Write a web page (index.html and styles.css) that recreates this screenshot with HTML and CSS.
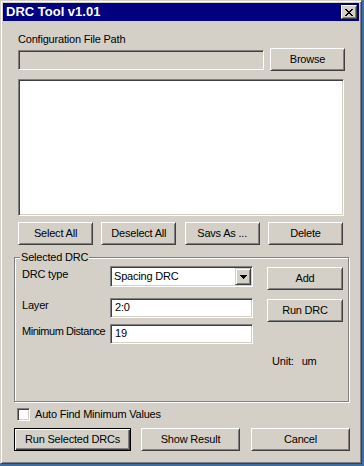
FILE: index.html
```html
<!DOCTYPE html>
<html>
<head>
<meta charset="utf-8">
<link rel="stylesheet" href="styles.css">
</head>
<body>
<div class="window">
  <div class="titlebar">
    <span class="title">DRC Tool v1.01</span>
    <button class="close" aria-label="Close">
      <svg width="8" height="7" viewBox="0 0 8 7"><path fill="#000" d="M0 0h2v1H0z M6 0h2v1H6z M1 1h2v1H1z M5 1h2v1H5z M2 2h4v1H2z M3 3h2v1H3z M2 4h4v1H2z M1 5h2v1H1z M5 5h2v1H5z M0 6h2v1H0z M6 6h2v1H6z"/></svg>
    </button>
  </div>
  <div class="client">
    <div class="cfg-label">Configuration File Path</div>
    <div class="path-row">
      <div class="field path-field"></div>
      <button class="btn browse">Browse</button>
    </div>
    <div class="field listbox"></div>
    <div class="btn-row">
      <button class="btn">Select All</button>
      <button class="btn">Deselect All</button>
      <button class="btn">Savs As ...</button>
      <button class="btn">Delete</button>
    </div>
    <fieldset class="group">
      <legend>Selected DRC</legend>
      <div class="group-body">
        <div class="left">
          <div class="frow r1">
            <span class="lbl lbl-combo">DRC type</span>
            <div class="field combo">
              <span class="combo-text">Spacing DRC</span>
              <span class="combo-btn">
                <svg width="7" height="4" viewBox="0 0 7 4"><path fill="#000" d="M0 0h7v1H0z M1 1h5v1H1z M2 2h3v1H2z M3 3h1v1H3z"/></svg>
              </span>
            </div>
          </div>
          <div class="frow r2">
            <span class="lbl">Layer</span>
            <div class="field input">2:0</div>
          </div>
          <div class="frow r3">
            <span class="lbl lbl-tight">Minimum Distance</span>
            <div class="field input">19</div>
          </div>
        </div>
        <div class="right">
          <button class="btn side add">Add</button>
          <button class="btn side run">Run DRC</button>
          <div class="unit">Unit:<span class="um">um</span></div>
        </div>
      </div>
    </fieldset>
    <label class="check-row"><span class="field checkbox"></span><span>Auto Find Minimum Values</span></label>
    <div class="bottom-row">
      <button class="btn default">Run Selected DRCs</button>
      <button class="btn show">Show Result</button>
      <button class="btn cancel">Cancel</button>
    </div>
  </div>
</div>
</body>
</html>
```
FILE: styles.css
```css
html, body {
  margin: 0;
  padding: 0;
}
body {
  background: #3a6ea5;
  font: 11px/13px "Liberation Sans", Arial, sans-serif;
  letter-spacing: -0.2px;
  color: #000;
}
.window {
  width: 362px;
  height: 464px;
  box-sizing: border-box;
  background: #d4d0c8;
  border: 1px solid;
  border-color: #d4d0c8 #404040 #404040 #d4d0c8;
  box-shadow: inset 1px 1px #fff, inset -1px -1px #808080;
  padding: 2px;
}
.titlebar {
  height: 18px;
  background: #000080;
  display: flex;
  align-items: center;
  justify-content: space-between;
  padding: 0 2px 0 3px;
  color: #fff;
  font-weight: bold;
  font-size: 13px;
  line-height: 18px;
  letter-spacing: 0;
}
.close {
  width: 16px;
  height: 14px;
  box-sizing: border-box;
  padding: 0;
  background: #d4d0c8;
  border: 1px solid;
  border-color: #fff #404040 #404040 #fff;
  box-shadow: inset 1px 1px #d4d0c8, inset -1px -1px #808080;
  display: flex;
  align-items: center;
  justify-content: center;
}
.close svg {
  display: block;
}
.client {
  padding: 0 8px 0 11px;
}
.field {
  box-sizing: border-box;
  background: #fff;
  border: 1px solid;
  border-color: #808080 #fff #fff #808080;
  box-shadow: inset 1px 1px #404040, inset -1px -1px #d4d0c8;
}
.btn {
  box-sizing: border-box;
  height: 23px;
  background: #d4d0c8;
  border: 1px solid;
  border-color: #fff #404040 #404040 #fff;
  box-shadow: inset 1px 1px #d4d0c8, inset -1px -1px #808080;
  font: inherit;
  letter-spacing: inherit;
  color: #000;
  padding: 0;
  margin: 0;
}
.cfg-label {
  margin: 12px 0 0 4px;
}
.path-row {
  display: flex;
  margin: 2px 6px 0 4px;
  gap: 6px;
}
.path-field {
  flex: 1;
  height: 20px;
  margin-top: 2px;
  background: #d4d0c8;
}
.browse {
  width: 75px;
}
.listbox {
  height: 137px;
  margin: 8px 7px 0 4px;
}
.btn-row {
  display: flex;
  justify-content: space-between;
  margin: 6px 8px 0 4px;
}
.btn-row .btn {
  width: 75px;
}
.group {
  margin: 6px 2px 0 0;
  padding: 2px 7px 33px 7px;
  border: 1px solid #808080;
  box-shadow: 1px 1px #fff, inset 1px 1px #fff;
  min-width: 0;
}
.group legend {
  padding: 0 1px;
  margin-left: -2px;
  line-height: 13px;
  background: #d4d0c8;
}
.group-body {
  display: flex;
}
.left {
  width: 231px;
}
.frow {
  display: flex;
  align-items: flex-start;
}
.lbl {
  width: 88px;
  flex: none;
  padding-top: 1px;
  white-space: nowrap;
}
.lbl-combo {
  padding-top: 2px;
}
.lbl-tight {
  letter-spacing: -0.45px;
}
.r2 {
  margin-top: 11px;
}
.r3 {
  margin-top: 6px;
}
.combo {
  width: 143px;
  height: 21px;
  display: flex;
  align-items: center;
  justify-content: space-between;
  padding: 1px;
}
.combo-text {
  padding-left: 2px;
}
.combo-btn {
  width: 16px;
  height: 17px;
  box-sizing: border-box;
  background: #d4d0c8;
  border: 1px solid;
  border-color: #d4d0c8 #404040 #404040 #d4d0c8;
  box-shadow: inset 1px 1px #fff, inset -1px -1px #808080;
  display: flex;
  align-items: center;
  justify-content: center;
}
.combo-btn svg {
  display: block;
}
.input {
  width: 143px;
  height: 20px;
  padding: 2px 4px;
}
.right {
  margin-left: 14px;
  display: flex;
  flex-direction: column;
  align-items: flex-start;
}
.side {
  width: 76px;
}
.add {
  margin-top: 1px;
}
.run {
  margin-top: 9px;
}
.unit {
  margin-top: 33px;
  padding-left: 5px;
}
.um {
  margin-left: 8px;
}
.check-row {
  display: flex;
  align-items: flex-start;
  gap: 5px;
  margin: 6px 0 0 3px;
}
.checkbox {
  width: 13px;
  height: 13px;
  display: block;
}
.bottom-row {
  display: flex;
  margin-top: 7px;
}
.default {
  width: 117px;
  border: 1px solid #000;
  box-shadow: inset 1px 1px #fff, inset -1px -1px #404040, inset -2px -2px #808080;
}
.show {
  width: 99px;
  margin-left: 10px;
}
.cancel {
  width: 99px;
  margin-left: 11px;
}
```
